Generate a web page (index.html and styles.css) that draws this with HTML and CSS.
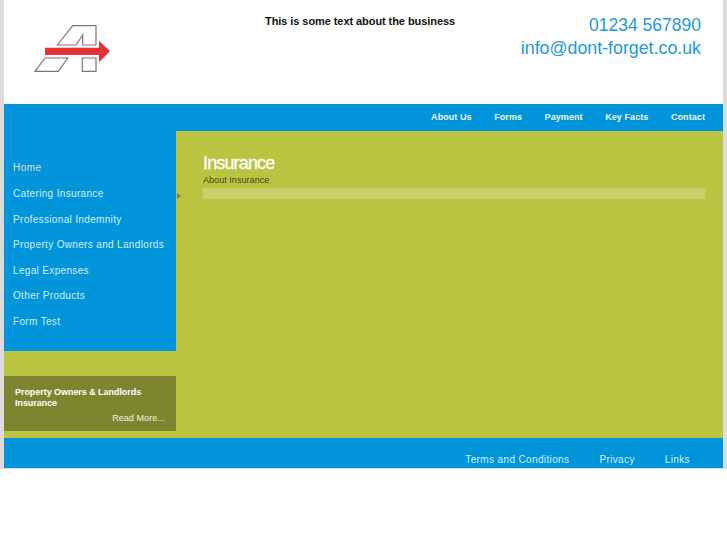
FILE: index.html
```html
<!DOCTYPE html>
<html lang="en">
<head>
<meta charset="utf-8">
<title>Insurance</title>
<link rel="stylesheet" href="styles.css">
</head>
<body>
<div class="page">
  <header class="header">
    <svg class="logo" width="80" height="50" viewBox="31 24 80 50" aria-label="Logo">
      <path class="logo-line" d="M57.3 45 72.7 25.7H96V45H82.7V35L76 45Z"/>
      <path class="logo-line" d="M35 71.3 45 58H67.7L58.3 71.3Z"/>
      <path class="logo-line" d="M82.3 58H96V71.3H82.3Z"/>
      <path class="logo-arrow" d="M45 47.7H99V40.7L110 51.3 99 62.3V55H45Z"/>
    </svg>
    <p class="tagline">This is some text about the business</p>
    <div class="contact">
      <div class="phone">01234 567890</div>
      <div class="email">info@dont-forget.co.uk</div>
    </div>
  </header>
  <nav class="topnav">
    <a>About Us</a><a>Forms</a><a>Payment</a><a>Key Facts</a><a>Contact</a>
  </nav>
  <div class="main">
    <aside class="sidebar">
      <ul class="menu">
        <li class="current">Home</li>
        <li>Catering Insurance</li>
        <li>Professional Indemnity</li>
        <li>Property Owners and Landlords</li>
        <li>Legal Expenses</li>
        <li>Other Products</li>
        <li>Form Test</li>
      </ul>
      <div class="promo">
        <h3>Property Owners &amp; Landlords Insurance</h3>
        <div class="more">Read More...</div>
      </div>
      <span class="marker"></span>
    </aside>
    <section class="content">
      <h1>Insurance</h1>
      <p class="sub">About Insurance</p>
      <div class="strip"></div>
    </section>
  </div>
  <footer class="footer">
    <a>Terms and Conditions</a><a>Privacy</a><a>Links</a>
  </footer>
</div>
</body>
</html>
```
FILE: styles.css
```css
* { box-sizing: border-box; }
html, body { margin: 0; padding: 0; background: #fff; }
body { font-family: "Liberation Sans", Arial, sans-serif; }
.page {
  width: 727px;
  height: 469px;
  border-left: 4px solid #dcdcdc;
  border-right: 4px solid #dcdcdc;
  border-bottom: 1px solid #cfe0ea;
  display: flex;
  flex-direction: column;
}
.header {
  height: 104px;
  background: #fff;
  display: flex;
  align-items: flex-start;
  padding-left: 27px;
}
.logo { margin-top: 24px; flex: none; }
.logo-line { fill: #fff; stroke: #777; stroke-width: 1.2; }
.logo-arrow { fill: #e43237; }
.tagline {
  margin: 14px 0 0 154px;
  width: 192px;
  font-size: 11px;
  line-height: 14px;
  font-weight: bold;
  letter-spacing: -0.07px;
  color: #111;
  white-space: nowrap;
}
.contact {
  margin-left: auto;
  padding: 14px 22px 0 0;
  text-align: right;
  line-height: 23px;
  color: #1d9ad9;
}
.phone { font-size: 17.5px; }
.email { font-size: 17.8px; }
.topnav {
  height: 27px;
  background: #0095da;
  display: flex;
  justify-content: flex-end;
  align-items: center;
  gap: 22.5px;
  padding: 0 18px 2px 0;
  font-size: 9px;
  font-weight: bold;
  letter-spacing: 0.08px;
  color: #eef7fc;
}
.main {
  height: 307px;
  display: flex;
  background: #b9c440;
}
.sidebar {
  position: relative;
  width: 172px;
  flex: none;
  display: flex;
  flex-direction: column;
}
.menu {
  list-style: none;
  margin: 0;
  padding: 24px 0 16px 9px;
  height: 220px;
  background: #0095da;
  font-size: 10px;
  letter-spacing: 0.34px;
  color: #d6eefa;
}
.menu li { height: 25.5px; line-height: 26px; white-space: nowrap; }
.menu .current { color: #e4dcd4; height: 26px; line-height: 26px; letter-spacing: 0.5px; }
.promo {
  margin-top: 25px;
  height: 55px;
  background: #7e852f;
  padding: 11px 11px 0;
  color: #f2f4e0;
}
.promo h3 {
  margin: 0;
  font-size: 9px;
  line-height: 10.5px;
  font-weight: bold;
  letter-spacing: -0.05px;
  color: #fff;
}
.more { font-size: 9px; line-height: 12px; margin-top: 4px; text-align: right; letter-spacing: 0.07px; }
.marker {
  position: absolute;
  left: 173px;
  top: 62px;
  border-left: 4px solid #7a7a5a;
  border-top: 3px solid transparent;
  border-bottom: 3px solid transparent;
}
.content { flex: 1; padding: 21px 18px 0 27px; }
.content h1 {
  margin: 0;
  font-size: 18px;
  line-height: 22px;
  font-weight: normal;
  letter-spacing: -0.85px;
  color: #fff;
  -webkit-text-stroke: 0.3px #fff;
}
.sub {
  margin: 0;
  font-size: 9px;
  line-height: 12px;
  letter-spacing: 0.05px;
  color: #44461e;
}
.strip { height: 11px; margin-top: 2px; background: #c8d06c; }
.footer {
  height: 30px;
  background: #0095da;
  display: flex;
  justify-content: flex-end;
  align-items: flex-end;
  gap: 30px;
  padding: 0 33px 1px 0;
  font-size: 10px;
  line-height: 14px;
  letter-spacing: 0.37px;
  color: #d6eefa;
}
```
